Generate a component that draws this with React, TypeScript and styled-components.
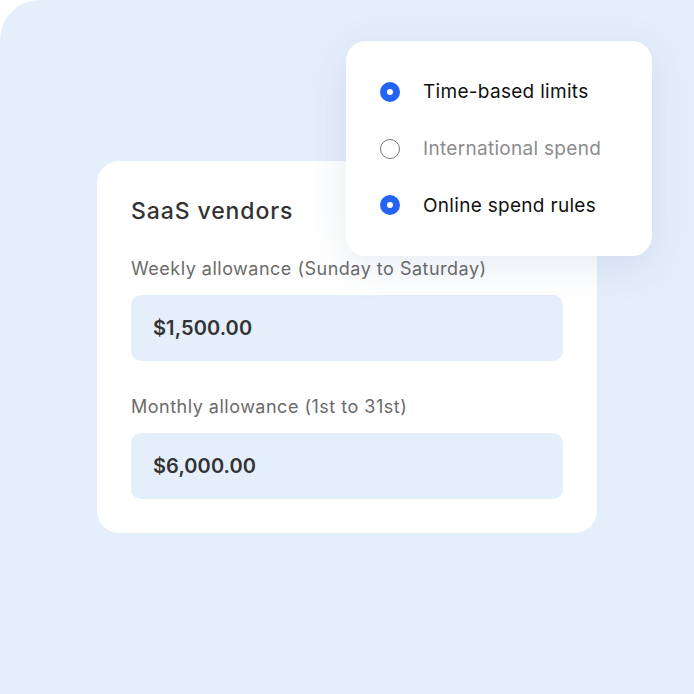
import React from 'react';
import styled, { createGlobalStyle } from 'styled-components';

const GlobalStyle = createGlobalStyle`
  html, body {
    margin: 0;
    padding: 0;
    background: #ffffff;
  }
  body {
    font-family: Inter, "Noto Sans", sans-serif;
  }
`;

const Panel = styled.div`
  position: relative;
  width: 694px;
  height: 694px;
  box-sizing: border-box;
  background: #e5eefb;
  border-top-left-radius: 40px;
  padding: 161px 0 0 97px;
  overflow: hidden;
`;

const Card = styled.div`
  width: 500px;
  box-sizing: border-box;
  background: #ffffff;
  border-radius: 22px;
  padding: 35px 34px 34px;
  display: flex;
  flex-direction: column;
`;

const Title = styled.h2`
  margin: 0;
  font-size: 23px;
  line-height: 30px;
  font-weight: 500;
  color: #333333;
  letter-spacing: 0.9px;
`;

const Label = styled.div<{ $first?: boolean }>`
  margin-top: ${p => (p.$first ? '31px' : '34px')};
  font-size: 18px;
  line-height: 24px;
  color: #6b6b6b;
  letter-spacing: 0.5px;
`;

const AmountBox = styled.div`
  margin-top: 14px;
  height: 66px;
  border-radius: 10px;
  background: #e5eefb;
  display: flex;
  align-items: center;
  padding: 0 22px;
  font-size: 20px;
  font-weight: 600;
  color: #333333;
  letter-spacing: 0.1px;
`;

const Popover = styled.div`
  position: absolute;
  top: 41px;
  left: 346px;
  width: 306px;
  height: 215px;
  box-sizing: border-box;
  background: #ffffff;
  border-radius: 20px;
  box-shadow: 0 10px 40px rgba(60, 90, 140, 0.12);
  padding: 37px 34px;
  display: flex;
  flex-direction: column;
  gap: 29px;
`;

const Option = styled.div<{ $muted?: boolean }>`
  display: flex;
  align-items: center;
  gap: 23px;
  height: 28px;
  font-size: 19px;
  letter-spacing: 0.3px;
  color: ${p => (p.$muted ? '#8c8c8c' : '#111111')};
`;

const Radio = styled.span<{ $checked?: boolean }>`
  width: 20px;
  height: 20px;
  box-sizing: border-box;
  border-radius: 50%;
  flex-shrink: 0;
  background: #ffffff;
  border: ${p => (p.$checked ? '7px solid #2563f6' : '1.5px solid #7a7a7a')};
`;

const options = [
  { label: 'Time-based limits', checked: true },
  { label: 'International spend', checked: false },
  { label: 'Online spend rules', checked: true },
];

const App: React.FC = () => {
  return (
    <>
      <GlobalStyle />
      <Panel>
        <Card>
          <Title>SaaS vendors</Title>
          <Label $first>Weekly allowance (Sunday to Saturday)</Label>
          <AmountBox>$1,500.00</AmountBox>
          <Label>Monthly allowance (1st to 31st)</Label>
          <AmountBox>$6,000.00</AmountBox>
        </Card>
        <Popover>
          {options.map(o => (
            <Option key={o.label} $muted={!o.checked}>
              <Radio $checked={o.checked} />
              {o.label}
            </Option>
          ))}
        </Popover>
      </Panel>
    </>
  );
};

export default App;
